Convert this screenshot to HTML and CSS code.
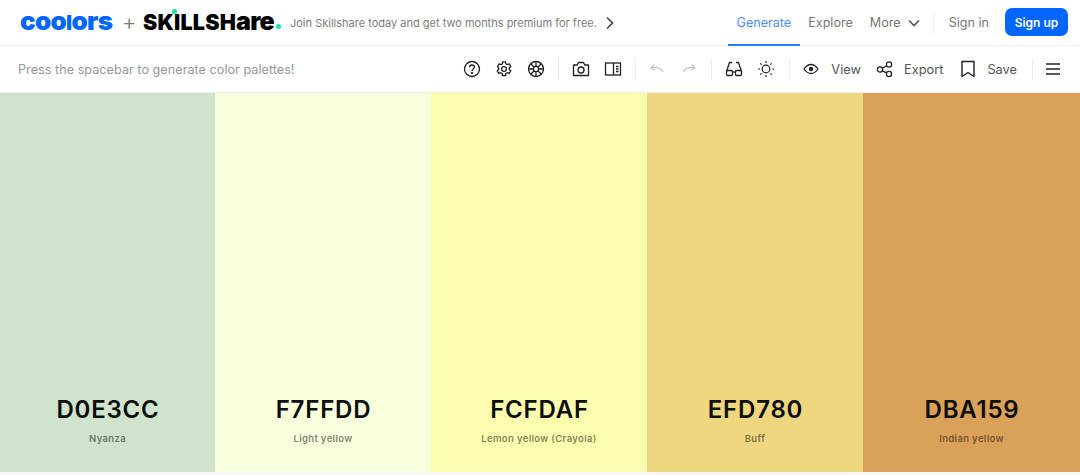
FILE: index.html
```html
<!DOCTYPE html>
<html lang="en">
<head>
<meta charset="utf-8">
<title>Coolors</title>
<link rel="stylesheet" href="styles.css">
</head>
<body>
<header class="topbar">
  <div class="brand">
    <span class="logo-coolors">coo<span class="short-l">l</span>ors</span>
    <span class="plus">+</span>
    <span class="logo-skill">SKILLSH<span class="logo-lower">are</span><b class="i-dot"></b><b class="end-dot"></b></span>
    <span class="promo">Join Skillshare today and get two months premium for free.</span>
    <svg class="promo-arrow" width="10" height="14" viewBox="0 0 10 14"><path d="M2 1.500 7.500 7 2 12.500" fill="none" stroke="#444" stroke-width="1.700"/></svg>
  </div>
  <nav class="nav">
    <a class="nav-link active">Generate</a>
    <a class="nav-link explore">Explore</a>
    <a class="nav-link more">More
      <svg width="12" height="8" viewBox="0 0 12 8"><path d="M1 1.500 6 6.500 11 1.500" fill="none" stroke="#555" stroke-width="1.700"/></svg>
    </a>
    <span class="nav-sep"></span>
    <a class="nav-link signin">Sign in</a>
    <a class="signup">Sign up</a>
  </nav>
</header>
<div class="toolbar">
  <p class="hint">Press the spacebar to generate color palettes!</p>
  <div class="tools">
    <button class="tool"><svg width="18" height="18" viewBox="0 0 18 18" fill="none" stroke="#222" stroke-width="1.300"><circle cx="9" cy="9" r="7.500"/><path d="M6.600 7.200C6.600 5.800 7.700 5 9 5s2.400.9 2.400 2.100c0 1.900-2.400 1.900-2.400 3.800"/><circle cx="9" cy="13" r=".5" fill="#222"/></svg></button>
    <button class="tool"><svg width="18" height="18" viewBox="0 0 18 18" fill="none" stroke="#222" stroke-width="1.300"><path d="M7.500 1.800h3l.4 2 1.500.8 1.900-.7 1.500 2.600-1.500 1.300v1.700l1.500 1.300-1.500 2.600-1.900-.7-1.500.8-.4 2h-3l-.4-2-1.500-.8-1.900.7-1.500-2.600 1.500-1.300V7.800L2.600 6.500l1.500-2.600 1.900.7 1.500-.8z" stroke-linejoin="round"/><circle cx="9" cy="9" r="2.400"/></svg></button>
    <button class="tool"><svg width="18" height="18" viewBox="0 0 18 18" fill="none" stroke="#222" stroke-width="1.300"><circle cx="9" cy="9" r="7.500"/><circle cx="9" cy="9" r="2.600"/><path d="M9 1.500v5M9 11.600v5M1.500 9h5M11.600 9h5M3.700 3.700l3.500 3.500M10.800 10.800l3.500 3.500M14.300 3.700l-3.500 3.500M7.200 10.800l-3.500 3.500"/></svg></button>
    <span class="sep"></span>
    <button class="tool"><svg width="18" height="18" viewBox="0 0 18 18" fill="none" stroke="#222" stroke-width="1.300"><path d="M1.500 5h3.700l1.300-2.500h5L12.800 5h3.700v10.500h-15z" stroke-linejoin="round"/><circle cx="9" cy="10" r="3"/></svg></button>
    <button class="tool"><svg width="18" height="18" viewBox="0 0 18 18" fill="none" stroke="#222" stroke-width="1.300"><rect x="1.500" y="3" width="15" height="12"/><path d="M9.500 3v12M12 6.500h2.500M12 9h2.500M12 11.500h2.500"/></svg></button>
    <span class="sep sep-tight"></span>
    <button class="tool"><svg width="16" height="12" viewBox="0 0 16 12" fill="none" stroke="#c4c4c4" stroke-width="1.300"><path d="M5 1.500 2 5l3.500 2M2 5c4.500-1.500 9-.5 12 4"/></svg></button>
    <button class="tool"><svg width="16" height="12" viewBox="0 0 16 12" fill="none" stroke="#c4c4c4" stroke-width="1.300"><path d="M11 1.500 14 5l-3.500 2M14 5C9.500 3.500 5 4.500 2 9"/></svg></button>
    <span class="sep"></span>
    <button class="tool"><svg width="18" height="18" viewBox="0 0 18 18" fill="none" stroke="#222" stroke-width="1.300"><path d="M1.500 11.500 4.500 2.500H7M16.500 11.500 13.500 2.500H11"/><rect x="1.500" y="10.500" width="6" height="5" rx="1.200"/><rect x="10.500" y="10.500" width="6" height="5" rx="1.200"/><path d="M7.500 12h3"/></svg></button>
    <button class="tool"><svg width="18" height="18" viewBox="0 0 18 18" fill="none" stroke="#222" stroke-width="1.200"><circle cx="9" cy="9" r="3.800"/><path d="M9 1v2M9 15v2M1 9h2M15 9h2M3.300 3.300l1.400 1.400M13.300 13.300l1.400 1.400M14.700 3.300l-1.400 1.400M4.700 13.300l-1.400 1.400"/></svg></button>
    <span class="sep sep-view"></span>
    <button class="tool labeled view"><span class="slot"><svg width="16" height="12" viewBox="0 0 16 12" fill="none" stroke="#222" stroke-width="1.300"><path d="M1 6c2-3 4.300-4.500 7-4.500S13 3 15 6c-2 3-4.300 4.500-7 4.500S3 9 1 6z"/><circle cx="8" cy="6" r="2.200" fill="#222" stroke="none"/></svg></span>View</button>
    <button class="tool labeled"><span class="slot nudge"><svg width="18" height="18" viewBox="0 0 18 18" fill="none" stroke="#222" stroke-width="1.300"><circle cx="4" cy="9.500" r="2.600"/><circle cx="13" cy="4.500" r="2.600"/><circle cx="13" cy="14" r="2.600"/><path d="M6.300 8.200 10.700 5.800M6.300 10.800 10.700 12.800"/></svg></span>Export</button>
    <button class="tool labeled save"><span class="slot nudge"><svg width="16" height="18" viewBox="0 0 16 18" fill="none" stroke="#222" stroke-width="1.400"><path d="M2 1.500h12v15l-6-4-6 4z" stroke-linejoin="round"/></svg></span>Save</button>
    <span class="sep sep-last"></span>
    <button class="tool"><svg width="16" height="14" viewBox="0 0 16 14" fill="none" stroke="#222" stroke-width="1.500"><path d="M1 2h14M1 7h14M1 12h14"/></svg></button>
  </div>
</div>
<main class="palette">
  <section class="swatch s1"><h2>D0E3CC</h2><p>Nyanza</p></section>
  <section class="swatch s2"><h2>F7FFDD</h2><p>Light yellow</p></section>
  <section class="swatch s3"><h2>FCFDAF</h2><p>Lemon yellow (Crayola)</p></section>
  <section class="swatch s4"><h2>EFD780</h2><p>Buff</p></section>
  <section class="swatch s5"><h2>DBA159</h2><p>Indian yellow</p></section>
</main>
</body>
</html>
```
FILE: styles.css
```css
* { box-sizing: border-box; }
html, body { margin: 0; height: 100%; }
body {
  width: 1080px;
  height: 475px;
  overflow: hidden;
  display: flex;
  flex-direction: column;
  background: #f6f6f6;
  font-family: Inter, "Liberation Sans", sans-serif;
  color: #333;
}
.topbar {
  height: 46px;
  flex: none;
  display: flex;
  justify-content: space-between;
  align-items: stretch;
  padding: 0 12px 0 20px;
  background: #fff;
  border-bottom: 1px solid #eeeeee;
}
.brand { display: flex; align-items: center; }
.logo-coolors {
  width: 94px;
  font-size: 26px;
  font-weight: 900;
  line-height: 1;
  letter-spacing: -.7px;
  color: #0066ff;
  margin-top: -3px;
  white-space: nowrap;
}
.short-l { font-size: .8em; }
.plus { margin: -2px 0 0 8px; width: 13px; font-size: 22px; font-weight: 300; color: #777; line-height: 1; }
.logo-skill {
  position: relative;
  width: 138px;
  margin-left: 8px;
  margin-top: -3px;
  font-size: 21.500px;
  font-weight: 900;
  line-height: 1;
  letter-spacing: .2px;
  color: #000;
  white-space: nowrap;
}
.logo-lower { font-size: 25px; letter-spacing: -.8px; }
.i-dot, .end-dot {
  position: absolute;
  width: 5px;
  height: 5px;
  border-radius: 50%;
  background: #14e69a;
}
.i-dot { left: 29px; top: 0; }
.end-dot { right: 0; bottom: 5px; }
.promo { margin-left: 9px; font-size: 11px; color: #7c7c7c; white-space: nowrap; }
.promo-arrow { margin-left: 8px; }
.nav { display: flex; align-items: center; height: 45px; }
.nav-link {
  height: 46px;
  align-self: flex-start;
  display: flex;
  align-items: center;
  gap: 7px;
  font-size: 12.600px;
  color: #777;
  margin-left: 17px;
  border-bottom: 2px solid transparent;
}
.nav-link.active {
  color: #4d8ff5;
  padding: 0 9px;
  margin-left: 0;
  border-bottom-color: #2b7cf6;
}
.nav-link.explore { margin-left: 8px; }
.nav-link.more svg { margin-top: 2px; }
.nav-sep { width: 1px; height: 22px; background: #eee; margin-left: 13px; }
.nav-link.signin { margin-left: 15px; }
.signup {
  align-self: flex-start;
  margin: 8px 0 0 16px;
  width: 63px;
  height: 28px;
  display: flex;
  align-items: center;
  justify-content: center;
  border-radius: 7px;
  background: #0066ff;
  color: #fff;
  font-size: 12px;
  font-weight: 600;
}
.toolbar {
  height: 47px;
  flex: none;
  display: flex;
  justify-content: space-between;
  align-items: center;
  padding: 0 11px 0 18px;
  background: #fff;
  border-bottom: 1px solid #eee;
}
.hint { margin: 0; font-size: 12.700px; color: #999; }
.tools { display: flex; align-items: center; }
.tool {
  width: 32px;
  height: 32px;
  padding: 0;
  border: 0;
  background: none;
  display: flex;
  align-items: center;
  justify-content: center;
  font: inherit;
  font-size: 12.800px;
  color: #555;
}
.tool.labeled { width: auto; justify-content: flex-start; margin-right: 4px; }
.tool.labeled.view { margin-right: 3px; }
.tool.labeled.save { margin-right: 0; }
.slot { width: 40px; display: flex; justify-content: center; }
.slot.nudge { padding-left: 2px; }
.sep { width: 1px; height: 23px; background: #eee; margin: 0 6px; }
.sep-tight { margin: 0 5px 0 6px; }
.sep-view { margin: 0 1px 0 7px; }
.sep-last { margin: 0 4px 0 15px; }
.palette {
  flex: none;
  height: 379px;
  display: grid;
  grid-template-columns: 215px repeat(3, 216px) 217px;
}
.swatch {
  display: flex;
  flex-direction: column;
  align-items: center;
  justify-content: flex-end;
  padding-bottom: 26px;
  color: #0b0e0a;
}
.swatch h2 {
  margin: 0;
  padding-left: 1px;
  font-size: 24px;
  line-height: 30px;
  font-weight: 600;
  letter-spacing: .8px;
}
.swatch p {
  margin: 7px 0 0;
  height: 14px;
  line-height: 14px;
  font-size: 9.500px;
  font-weight: 600;
  letter-spacing: .35px;
  color: rgba(0,0,0,.5);
}
.s1 { background: #d0e3cc; }
.s2 { background: #f7ffdd; }
.s3 { background: #fcfdaf; }
.s4 { background: #efd780; }
.s5 { background: #dba159; }
```
